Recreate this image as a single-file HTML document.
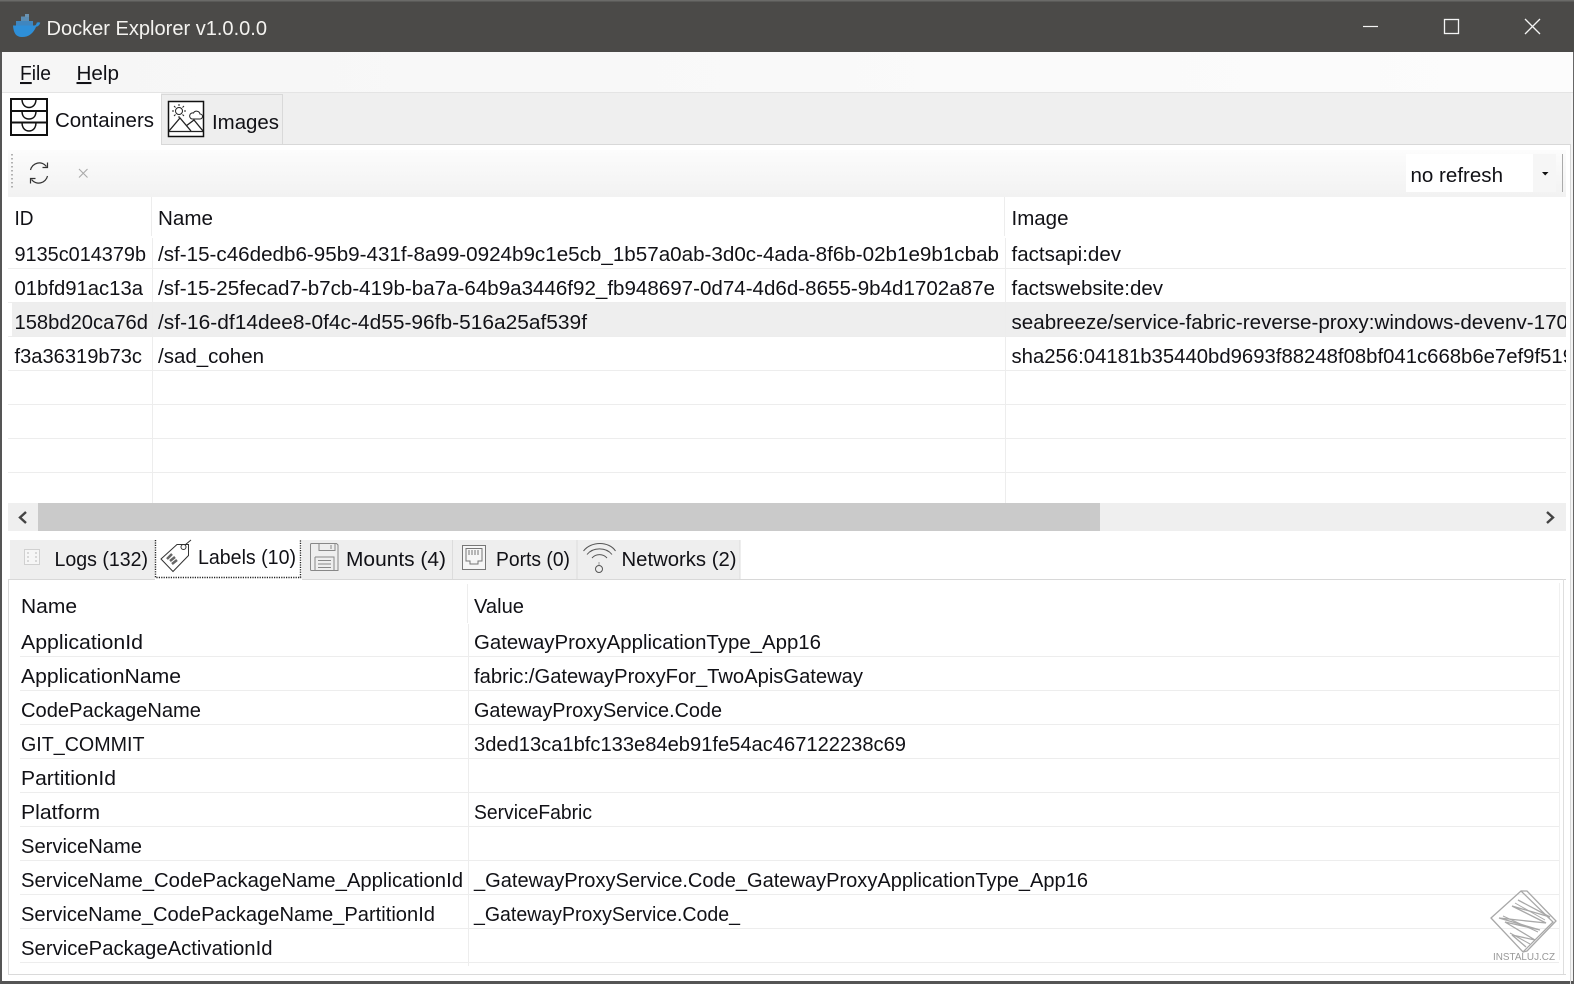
<!DOCTYPE html>
<html lang="en"><head><meta charset="utf-8"><title>Docker Explorer v1.0.0.0</title>
<style>
html,body{margin:0;padding:0;background:#fff;width:1574px;height:984px;overflow:hidden}
svg{display:block}
text{font-family:"Liberation Sans",sans-serif;font-size:20.5px;fill:#111116}
.ln{stroke:#ededed;stroke-width:1;fill:none}
.i{fill:none;stroke:#111;stroke-width:2}
</style></head><body>
<svg width="1574" height="984" viewBox="0 0 1574 984" xmlns="http://www.w3.org/2000/svg">
<defs>
<linearGradient id="tb" x1="0" y1="0" x2="0" y2="1"><stop offset="0" stop-color="#fcfcfc"/><stop offset="1" stop-color="#f2f2f2"/></linearGradient>
<linearGradient id="mb" x1="0" y1="0" x2="1" y2="0"><stop offset="0" stop-color="#f6f6f6"/><stop offset="1" stop-color="#fcfcfc"/></linearGradient>
<clipPath id="c"><rect x="1006" y="240" width="560" height="140"/></clipPath>
</defs>
<rect width="1574" height="984" fill="#fff"/>
<!-- title bar -->
<rect width="1574" height="52" fill="#4b4a48"/>
<rect width="1574" height="1.5" fill="#6a6a68"/>
<!-- whale -->
<g>
<path d="M13 25.500H34.500c1-.2 2-1 2.200-2.800 1-.6 2.500-.6 3.600 0-1 2.600-2.400 3.800-4.200 4C33.500 33 29 37 22 37c-6 0-8.500-4-9-11.500z" fill="#2e8fd8"/>
<rect x="16" y="21" width="17" height="4.500" fill="#3f86bf"/>
<rect x="21" y="16.500" width="8" height="4.500" fill="#5c8db3"/>
<rect x="25" y="14" width="4" height="3" fill="#6b93b1"/>
</g>
<text x="46.500" y="35" textLength="220.500" lengthAdjust="spacingAndGlyphs" style="fill:#f4f3f0">Docker Explorer v1.0.0.0</text>
<path d="M1363 26.500H1378" stroke="#f4f4f4" stroke-width="1.200"/>
<rect x="1444.500" y="19.500" width="14" height="14" fill="none" stroke="#f4f4f4" stroke-width="1.300"/>
<path d="M1525 19L1540 34M1540 19L1525 34" stroke="#f4f4f4" stroke-width="1.300"/>
<!-- frame -->
<rect x="0" y="52" width="2" height="932" fill="#555"/>
<rect x="1573" y="52" width="1" height="932" fill="#666"/>
<rect x="0" y="981" width="1574" height="3" fill="#555"/>
<!-- menu -->
<rect x="2" y="52" width="1571" height="41" fill="url(#mb)"/>
<rect x="2" y="92" width="1571" height="1" fill="#e4e4e4"/>
<text x="20" y="80" textLength="31" lengthAdjust="spacingAndGlyphs"><tspan text-decoration="underline">F</tspan>ile</text>
<text x="76.500" y="80" textLength="42.500" lengthAdjust="spacingAndGlyphs"><tspan text-decoration="underline">H</tspan>elp</text>
<!-- tab strip -->
<rect x="2" y="93" width="1571" height="51" fill="#efefef"/>
<rect x="161.500" y="94.500" width="121" height="50" fill="#eeeeee" stroke="#d9d9d9"/>
<rect x="2" y="93" width="159" height="53" fill="#fff"/>
<path d="M161 144.500H1571M1570.500 144V984" stroke="#d8d8d8" fill="none"/>
<rect x="1571" y="93" width="2" height="888" fill="#f4f4f4"/>
<!-- containers icon -->
<g class="i">
<rect x="11" y="99" width="36" height="36"/>
<path d="M11 111H47M11 122.500H47"/>
<path d="M22 99c0 6 3.500 8.500 7 8.500s7-2.500 7-8.500M22 111c0 6 3.500 8 7 8s7-2 7-8M22 122.500c0 6 3.500 8.500 7 8.500s7-2.500 7-8.500" stroke-width="1.500"/>
</g>
<text x="55" y="127" textLength="99" lengthAdjust="spacingAndGlyphs">Containers</text>
<!-- images icon -->
<rect x="168.500" y="101.500" width="35" height="35" fill="#fff" stroke="#111" stroke-width="1.500"/>
<g fill="none" stroke="#222" stroke-width="1">
<circle cx="179" cy="111" r="3.500"/>
<path d="M179 104V106M179 116V118M172 111H174M184 111H186M174 106L175.500 107.500M184 106L182.500 107.500M174 116L175.500 114.500M184 116L182.500 114.500"/>
<path d="M192 119h8a2.500 2.500 0 0 0 0-5 3.500 3.500 0 0 0-6.500-1 3 3 0 0 0-1.500 6z"/>
<path d="M169 131L180 118L191 131M186 126L194 120L203 131" stroke-width="1.300"/>
<path d="M169 131.500H203" stroke-width="1.300"/>
</g>
<text x="212" y="129" textLength="67" lengthAdjust="spacingAndGlyphs">Images</text>
<!-- toolbar -->
<rect x="8" y="150" width="1558" height="47" fill="url(#tb)"/>
<path d="M12 154V189" stroke="#9a9a9a" stroke-width="1.500" stroke-dasharray="1.500 2.500"/>
<g fill="none" stroke="#333" stroke-width="1.200">
<path d="M30.500 170a9 9 0 0 1 16-3.500M47.500 176a9 9 0 0 1-16 3.500"/>
<path d="M47.500 162.500V167.500H42.500M30.500 183.500V178.500H35.500"/>
</g>
<path d="M79 169L87.500 177.500M87.500 169L79 177.500" stroke="#aaa" stroke-width="1.100"/>
<rect x="1406" y="154" width="127" height="38" fill="#fff"/>
<rect x="1533" y="154" width="23" height="38" fill="#f6f6f6"/>
<text x="1410.500" y="182" textLength="92.500" lengthAdjust="spacingAndGlyphs">no refresh</text>
<path d="M1542 172H1548.500L1545.200 175.500z" fill="#111"/>
<path d="M1562.500 154V192" stroke="#aaa"/>
<!-- upper table -->
<rect x="8" y="197" width="1558" height="306" fill="#fff"/>
<rect x="12" y="302" width="1554" height="34" fill="#eeeeee"/>
<g class="ln">
<path d="M8 268.500H1566M8 302.500H1566M8 336.500H1566M8 370.500H1566M8 404.500H1566M8 438.500H1566M8 472.500H1566"/>
<path d="M152.500 238V503M1005.500 238V503"/>
<path d="M151.500 197V236M1004.500 197V236"/>
</g>
<text x="14.500" y="225" textLength="19" lengthAdjust="spacingAndGlyphs">ID</text>
<text x="158" y="225" textLength="55" lengthAdjust="spacingAndGlyphs">Name</text>
<text x="1011.500" y="225" textLength="57" lengthAdjust="spacingAndGlyphs">Image</text>
<text x="14.500" y="261" textLength="131.500" lengthAdjust="spacingAndGlyphs">9135c014379b</text>
<text x="14.500" y="295" textLength="128.500" lengthAdjust="spacingAndGlyphs">01bfd91ac13a</text>
<text x="14.500" y="329" textLength="133.500" lengthAdjust="spacingAndGlyphs">158bd20ca76d</text>
<text x="14.500" y="363" textLength="127.500" lengthAdjust="spacingAndGlyphs">f3a36319b73c</text>
<text x="158" y="261" textLength="841" lengthAdjust="spacingAndGlyphs">/sf-15-c46dedb6-95b9-431f-8a99-0924b9c1e5cb_1b57a0ab-3d0c-4ada-8f6b-02b1e9b1cbab</text>
<text x="158" y="295" textLength="837" lengthAdjust="spacingAndGlyphs">/sf-15-25fecad7-b7cb-419b-ba7a-64b9a3446f92_fb948697-0d74-4d6d-8655-9b4d1702a87e</text>
<text x="158" y="329" textLength="429" lengthAdjust="spacingAndGlyphs">/sf-16-df14dee8-0f4c-4d55-96fb-516a25af539f</text>
<text x="158" y="363" textLength="106" lengthAdjust="spacingAndGlyphs">/sad_cohen</text>
<g clip-path="url(#c)">
<text x="1011.500" y="261" textLength="109.500" lengthAdjust="spacingAndGlyphs">factsapi:dev</text>
<text x="1011.500" y="295" textLength="151.500" lengthAdjust="spacingAndGlyphs">factswebsite:dev</text>
<text x="1011.500" y="329" textLength="556.500" lengthAdjust="spacingAndGlyphs">seabreeze/service-fabric-reverse-proxy:windows-devenv-170</text>
<text x="1011.500" y="363" textLength="562.500" lengthAdjust="spacingAndGlyphs">sha256:04181b35440bd9693f88248f08bf041c668b6e7ef9f519</text>
</g>
<!-- scrollbar -->
<rect x="8" y="503" width="1558" height="28" fill="#efefef"/>
<rect x="38" y="503" width="1062" height="28" fill="#cacaca"/>
<path d="M26 512L20 517.500L26 523" fill="none" stroke="#444" stroke-width="2.400"/>
<path d="M1547 512L1553 517.500L1547 523" fill="none" stroke="#444" stroke-width="2.400"/>
<!-- lower tabs -->
<rect x="10" y="540" width="730" height="39" fill="#eeeeee"/>
<rect x="155" y="540" width="147" height="39" fill="#fff"/>
<path d="M155.500 540V577.500H300.500V540" fill="none" stroke="#222" stroke-dasharray="1.200 1.200" stroke-width="1.400"/>
<path d="M452.500 540V579M577 540V579M740 540V579" stroke="#dcdcdc"/>
<path d="M8.500 579.500H155M302 579.500H1566" stroke="#d8d8d8"/>
<path d="M8.500 579V974.500H1566" fill="none" stroke="#dadada"/>
<path d="M1563.500 579V974" stroke="#dedede"/>
<path d="M1559.500 583V960" stroke="#f0f0f0"/>
<!-- logs icon -->
<rect x="24.500" y="549.500" width="15" height="15" fill="#f6f6f6" stroke="#d0d0d0"/>
<path d="M28 552V563M36 552V563" stroke="#bbb" stroke-dasharray="2 2"/>
<text x="54.500" y="566" textLength="93.500" lengthAdjust="spacingAndGlyphs">Logs (132)</text>
<!-- tag icon -->
<g fill="none" stroke="#333" stroke-width="1">
<path d="M161 559L177 544.500H188.500V555.500L173 571.500z"/>
<circle cx="183.500" cy="547" r="2.500"/>
<path d="M185 545L191 540"/>
<path d="M167 559L172 554M170 561L175 557M172 564L177 560" stroke-width="2.500" stroke="#666"/>
</g>
<text x="198" y="564" textLength="98" lengthAdjust="spacingAndGlyphs">Labels (10)</text>
<!-- floppy -->
<g fill="none" stroke="#888" stroke-width="1">
<path d="M311 543.500H336.500L338 545V570.500H311.500A1 1 0 0 1 310.500 569.500V544.500z"/>
<path d="M319 543.500V550.500H335V543.500M331 545V549"/>
<path d="M315 557H334V570M315 557V570M318 560.500H331M318 564H331M318 567.500H331"/>
</g>
<text x="346" y="566" textLength="100" lengthAdjust="spacingAndGlyphs">Mounts (4)</text>
<!-- ports -->
<g fill="none" stroke="#777" stroke-width="1">
<rect x="462.500" y="545.500" width="23" height="24" fill="#f6f6f6"/>
<path d="M466 548.500H482V561H478V564H470V561H466z"/>
<path d="M469 550V555M472 550V555M475 550V555M478 550V555" stroke-width="1"/>
</g>
<text x="496" y="566" textLength="74" lengthAdjust="spacingAndGlyphs">Ports (0)</text>
<!-- wifi -->
<g fill="none" stroke="#555" stroke-width="1">
<path d="M583.500 551C591 541 609 541 615.500 551"/>
<path d="M587 554.500C593 547 606 547 612 554.500"/>
<path d="M592 558C596 553.500 603 553.500 607 558"/>
<circle cx="599" cy="569" r="3.500"/>
<path d="M599 562V565" stroke="#999"/>
</g>
<text x="621.500" y="566" textLength="115" lengthAdjust="spacingAndGlyphs">Networks (2)</text>
<!-- lower table -->
<g class="ln">
<path d="M20 656.500H1559M20 690.500H1559M20 724.500H1559M20 758.500H1559M20 792.500H1559M20 826.500H1559M20 860.500H1559M20 894.500H1559M20 928.500H1559M20 962.500H1559"/>
<path d="M468.500 624V966"/>
<path d="M467.500 584V623"/>
</g>
<text x="21" y="613" textLength="56" lengthAdjust="spacingAndGlyphs">Name</text>
<text x="474" y="613" textLength="50" lengthAdjust="spacingAndGlyphs">Value</text>
<text x="21" y="649" textLength="122" lengthAdjust="spacingAndGlyphs">ApplicationId</text>
<text x="21" y="683" textLength="160" lengthAdjust="spacingAndGlyphs">ApplicationName</text>
<text x="21" y="717" textLength="180" lengthAdjust="spacingAndGlyphs">CodePackageName</text>
<text x="21" y="751" textLength="123.500" lengthAdjust="spacingAndGlyphs">GIT_COMMIT</text>
<text x="21" y="785" textLength="95" lengthAdjust="spacingAndGlyphs">PartitionId</text>
<text x="21" y="819" textLength="79" lengthAdjust="spacingAndGlyphs">Platform</text>
<text x="21" y="853" textLength="121" lengthAdjust="spacingAndGlyphs">ServiceName</text>
<text x="21" y="887" textLength="442" lengthAdjust="spacingAndGlyphs">ServiceName_CodePackageName_ApplicationId</text>
<text x="21" y="921" textLength="414" lengthAdjust="spacingAndGlyphs">ServiceName_CodePackageName_PartitionId</text>
<text x="21" y="955" textLength="251.500" lengthAdjust="spacingAndGlyphs">ServicePackageActivationId</text>
<text x="474" y="649" textLength="347" lengthAdjust="spacingAndGlyphs">GatewayProxyApplicationType_App16</text>
<text x="474" y="683" textLength="389" lengthAdjust="spacingAndGlyphs">fabric:/GatewayProxyFor_TwoApisGateway</text>
<text x="474" y="717" textLength="248" lengthAdjust="spacingAndGlyphs">GatewayProxyService.Code</text>
<text x="474" y="751" textLength="432" lengthAdjust="spacingAndGlyphs">3ded13ca1bfc133e84eb91fe54ac467122238c69</text>
<text x="474" y="819" textLength="118" lengthAdjust="spacingAndGlyphs">ServiceFabric</text>
<text x="474" y="887" textLength="614" lengthAdjust="spacingAndGlyphs">_GatewayProxyService.Code_GatewayProxyApplicationType_App16</text>
<text x="474" y="921" textLength="266" lengthAdjust="spacingAndGlyphs">_GatewayProxyService.Code_</text>
<!-- watermark -->
<g fill="none" stroke="#a8a8a8" stroke-width="1.300">
<path d="M1491 918L1521 891L1553 922L1523 952z"/>
<path d="M1521 891L1527 891L1556 921L1527 951L1523 952"/>
<path d="M1518 900L1550 917L1512 906L1546 923L1499 918L1540 930L1505 922L1535 940L1512 935L1526 947"/>
<path d="M1515 903L1545 920M1503 916L1538 932M1510 933L1530 944" stroke-width="1"/>
</g>
<text x="1493" y="960" textLength="62" lengthAdjust="spacingAndGlyphs" style="font-size:10.500px;fill:#999">INSTALUJ.CZ</text>
</svg>
</body></html>
